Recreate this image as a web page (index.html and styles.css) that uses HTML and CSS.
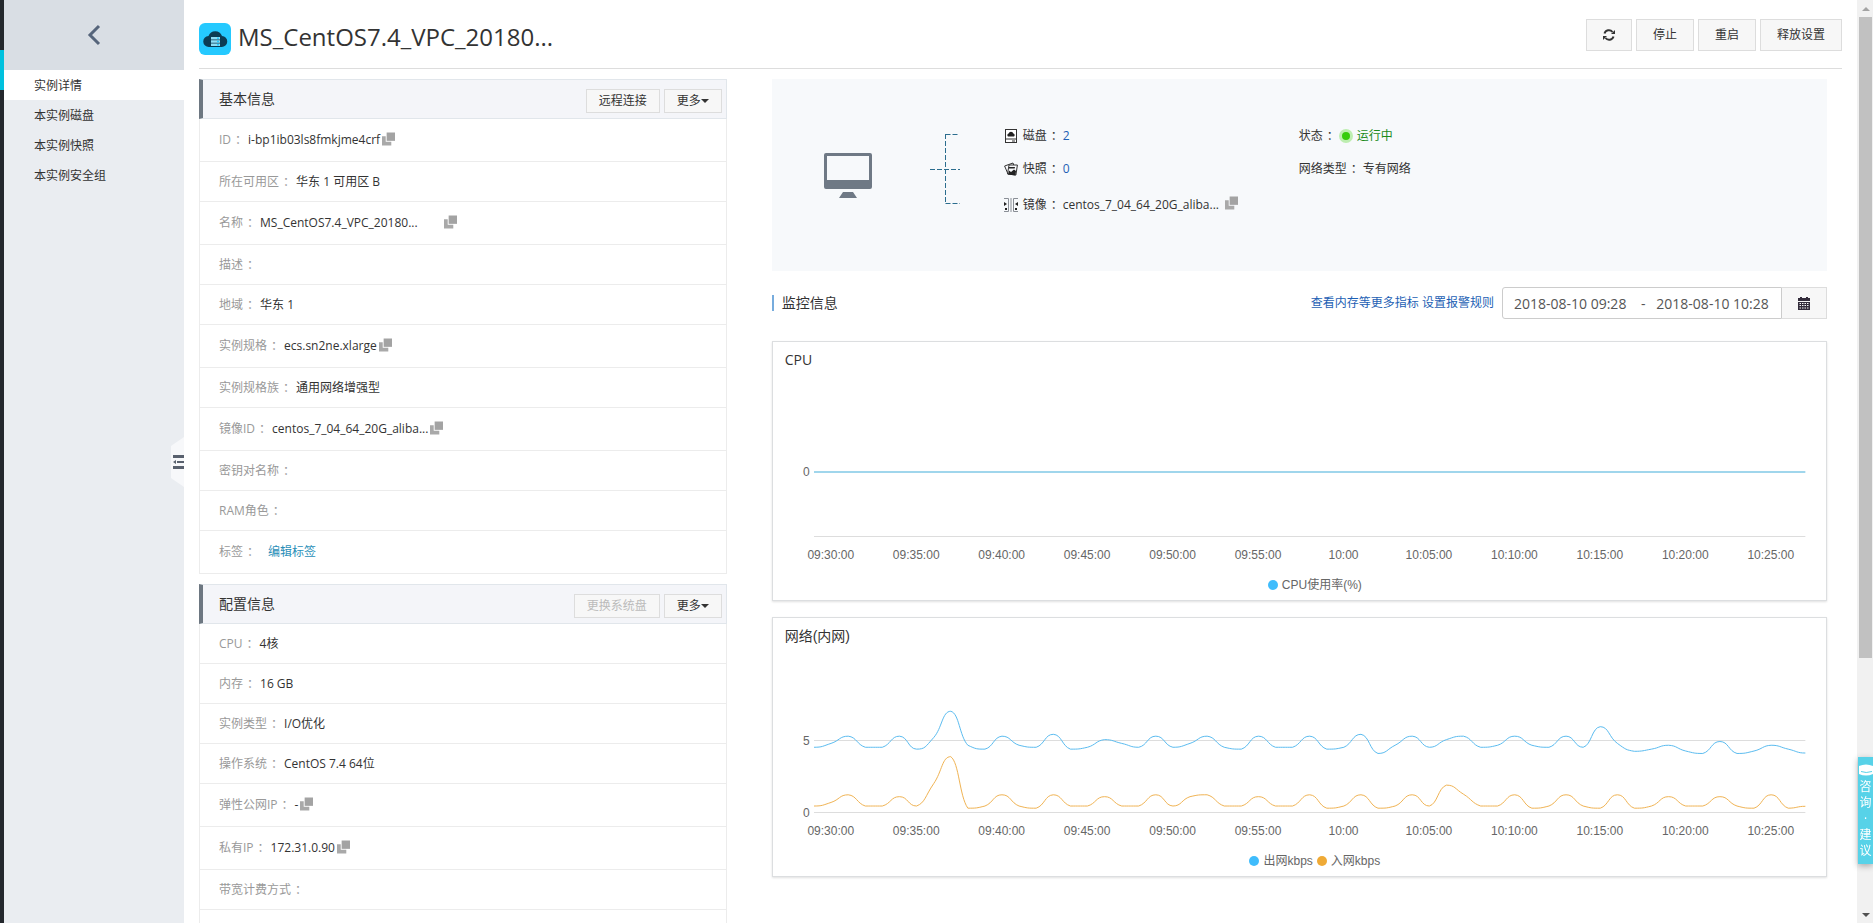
FILE: index.html
```html
<!DOCTYPE html>
<html lang="zh-CN">
<head>
<meta charset="utf-8">
<title>实例详情</title>
<link rel="stylesheet" href="styles.css">
</head>
<body>
<svg class="defs" aria-hidden="true">
  <symbol id="copy" viewBox="0 0 14 14"><path fill="#a3a3a3" d="M5 0h9v9H5z"/><path fill="#a9a9a9" d="M0 4h4v6h6v4H0z"/></symbol>
</svg>
<div class="page">
  <div class="rail"><div class="rail-active"></div></div>

  <aside class="sidebar">
    <button class="back" aria-label="返回">
      <svg width="14" height="22" viewBox="0 0 14 22"><path d="M12 2 3 11l9 9" fill="none" stroke="#56657b" stroke-width="3"/></svg>
    </button>
    <nav class="menu">
      <a class="menu-item active" href="#">实例详情</a>
      <a class="menu-item" href="#">本实例磁盘</a>
      <a class="menu-item" href="#">本实例快照</a>
      <a class="menu-item" href="#">本实例安全组</a>
    </nav>
    <button class="collapse" aria-label="收起">
      <svg width="13" height="50" viewBox="0 0 13 50"><path fill="#f7f8fa" d="M13 0v50L0 41V9z"/><path fill="#59616e" d="M2 18h11v3H2zM6 24h7v2H6zM2 29h11v3H2zM2 25l3-2v4z"/></svg>
    </button>
  </aside>

  <main class="main">
    <header class="topbar">
      <svg class="logo" width="32" height="32" viewBox="0 0 32 32"><rect width="32" height="32" rx="6" fill="#25c9ff"/><path fill="#0c3c54" d="M10 24a5.500 5.500 0 0 1-.5-11 7.200 7.200 0 0 1 13.500 0A5.500 5.500 0 0 1 22.500 24z"/><path fill="#8edcf5" d="M12 14h9v2.500h-9zM12 17.200h9v2.500h-9zM12 20.400h9v2.500h-9z"/><path fill="#25c9ff" d="M18 14.500h2v1.500h-2zM18 17.700h2v1.500h-2zM18 20.900h2v1.500h-2z"/></svg>
      <h1>MS_CentOS7.4_VPC_20180...</h1>
      <div class="actions">
        <button class="btn" aria-label="刷新">
          <svg width="12" height="14" viewBox="0 0 12 14"><g fill="none" stroke="#333" stroke-width="2"><path d="M1.500 5.500a4.600 4.600 0 0 1 8-1.500M10.500 8.500a4.600 4.600 0 0 1-8 1.500"/></g><path fill="#333" d="M12 2v4H8zM0 12V8h4z"/></svg>
        </button>
        <button class="btn">停止</button>
        <button class="btn">重启</button>
        <button class="btn">释放设置</button>
      </div>
    </header>

    <div class="content">
      <div class="col-info">
        <section class="card">
          <header class="card-head">
            <h2>基本信息</h2>
            <button class="btn small">远程连接</button>
            <button class="btn small">更多<i class="caret"></i></button>
          </header>
          <dl class="rows">
            <div class="row tall"><dt>ID<span class="colon">：</span></dt><dd>i-bp1ib03ls8fmkjme4crf<svg class="copy"><use href="#copy"/></svg></dd></div>
            <div class="row"><dt>所在可用区<span class="colon">：</span></dt><dd>华东 1 可用区 B</dd></div>
            <div class="row tall"><dt>名称<span class="colon">：</span></dt><dd>MS_CentOS7.4_VPC_20180...<svg class="copy far"><use href="#copy"/></svg></dd></div>
            <div class="row"><dt>描述<span class="colon">：</span></dt><dd></dd></div>
            <div class="row"><dt>地域<span class="colon">：</span></dt><dd>华东 1</dd></div>
            <div class="row tall"><dt>实例规格<span class="colon">：</span></dt><dd>ecs.sn2ne.xlarge<svg class="copy"><use href="#copy"/></svg></dd></div>
            <div class="row"><dt>实例规格族<span class="colon">：</span></dt><dd>通用网络增强型</dd></div>
            <div class="row tall"><dt>镜像ID<span class="colon">：</span></dt><dd>centos_7_04_64_20G_aliba...<svg class="copy"><use href="#copy"/></svg></dd></div>
            <div class="row"><dt>密钥对名称<span class="colon">：</span></dt><dd></dd></div>
            <div class="row"><dt>RAM角色<span class="colon">：</span></dt><dd></dd></div>
            <div class="row tall"><dt>标签<span class="colon">：</span></dt><dd><a class="tag-link" href="#">编辑标签</a></dd></div>
          </dl>
        </section>

        <section class="card">
          <header class="card-head">
            <h2>配置信息</h2>
            <button class="btn small" disabled>更换系统盘</button>
            <button class="btn small">更多<i class="caret"></i></button>
          </header>
          <dl class="rows">
            <div class="row"><dt>CPU<span class="colon">：</span></dt><dd>4核</dd></div>
            <div class="row"><dt>内存<span class="colon">：</span></dt><dd>16 GB</dd></div>
            <div class="row"><dt>实例类型<span class="colon">：</span></dt><dd>I/O优化</dd></div>
            <div class="row"><dt>操作系统<span class="colon">：</span></dt><dd>CentOS 7.4 64位</dd></div>
            <div class="row tall"><dt>弹性公网IP<span class="colon">：</span></dt><dd>-<svg class="copy"><use href="#copy"/></svg></dd></div>
            <div class="row tall"><dt>私有IP<span class="colon">：</span></dt><dd>172.31.0.90<svg class="copy"><use href="#copy"/></svg></dd></div>
            <div class="row"><dt>带宽计费方式<span class="colon">：</span></dt><dd></dd></div>
            <div class="row tall"></div>
          </dl>
        </section>
      </div>

      <div class="col-monitor">
        <section class="summary">
          <svg class="computer" width="48" height="46" viewBox="0 0 48 46"><path fill="#6f7985" fill-rule="evenodd" d="M2 0h44a2 2 0 0 1 2 2v32a2 2 0 0 1-2 2H2a2 2 0 0 1-2-2V2a2 2 0 0 1 2-2zm1 3v24h42V3zM19 39h10l4 6H15z"/></svg>
          <svg class="tree" width="30" height="70" viewBox="0 0 30 70"><path d="M15.500 0v70M15.500.5H28M0 35.500h30M15.500 69.500H30" fill="none" stroke="#2b6d8e" stroke-dasharray="5 2"/></svg>
          <ul class="facts">
            <li>
              <svg width="14" height="14" viewBox="0 0 14 14"><rect x="1.500" y=".5" width="11" height="13" fill="#fff" stroke="#333"/><path stroke="#333" d="M1.500 10h11M8 12h3"/><path fill="#222" d="M4 7.500a1.700 1.700 0 0 1 .6-3 2.500 2.500 0 0 1 4.800 0 1.700 1.700 0 0 1 .6 3z"/></svg>
              <span class="fact-label">磁盘<span class="colon">：</span></span><a href="#">2</a>
            </li>
            <li>
              <svg width="14" height="14" viewBox="0 0 14 14"><g fill="#f9fafc" stroke="#333"><path d="M.6 4 9 1l3 8-8 3z"/><path d="M5 3h8.400l-1.500 10L3.500 12z"/></g><path fill="#222" d="m4 12.500 1-4 2 1.500 3-2.500 2 1.500-.5 4.500zM5 5h6l-.3 1.500H5z"/></svg>
              <span class="fact-label">快照<span class="colon">：</span></span><a href="#">0</a>
            </li>
            <li>
              <svg width="14" height="14" viewBox="0 0 14 14"><g fill="none" stroke="#8a8f96"><path d="M0 .5h4.500v13H0M14 .5H9.500v13H14M7 0v14"/></g><path fill="#222" d="M0 4l3 2-3 2zM14 4l-3 2 3 2zM1 10h2v2H1zM11 10h2v2h-2z"/></svg>
              <span class="fact-label">镜像<span class="colon">：</span></span><span>centos_7_04_64_20G_aliba...</span><svg class="copy near"><use href="#copy"/></svg>
            </li>
          </ul>
          <ul class="facts">
            <li><span class="fact-label">状态<span class="colon">：</span></span><i class="status-dot"></i><span class="running">运行中</span></li>
            <li><span class="fact-label">网络类型<span class="colon">：</span></span><span>专有网络</span></li>
          </ul>
        </section>

        <div class="monitor-bar">
          <h2>监控信息</h2>
          <p class="links"><a href="#">查看内存等更多指标</a> <a href="#">设置报警规则</a></p>
          <div class="date-group">
            <input type="text" aria-label="时间范围" value="2018-08-10 09:28    -   2018-08-10 10:28">
            <button class="btn" aria-label="选择日期">
              <svg width="12" height="13" viewBox="0 0 12 13"><path fill="#332c3b" fill-rule="evenodd" d="M2 0h2v1h4V0h2v1h2v3H0V1h2zM0 5h12v8H0zm1.500 1v1h1.500V6zm2.500 0v1h1.500V6zm2.500 0v1H8V6zm2.500 0v1h1.500V6zM1.500 8v1H3V8zM4 8v1h1.500V8zm2.500 0v1H8V8zM9 8v1h1.500V8zm-7.500 2.500v1H3v-1zm2.500 0v1h1.500v-1zm2.500 0v1H8v-1zm2.500 0v1h1.500v-1z"/></svg>
            </button>
          </div>
        </div>

        <section class="chart">
          <h3>CPU</h3>
          <div class="chart-body">
            <div class="y-axis cpu"><span>0</span></div>
            <svg class="plot" viewBox="0 0 991 160" preserveAspectRatio="none">
              <path class="axis" d="M0 159.500h991"/>
              <path class="cpu-line" d="M0 95h991"/>
            </svg>
          </div>
          <div class="x-axis"><div class="ticks"><span>09:30:00</span><span>09:35:00</span><span>09:40:00</span><span>09:45:00</span><span>09:50:00</span><span>09:55:00</span><span>10:00</span><span>10:05:00</span><span>10:10:00</span><span>10:15:00</span><span>10:20:00</span><span>10:25:00</span></div></div>
          <div class="legend"><i class="dot blue"></i><span>CPU使用率(%)</span></div>
        </section>

        <section class="chart">
          <h3>网络(内网)</h3>
          <div class="chart-body">
            <div class="y-axis net"><span>5</span><span>0</span></div>
            <svg class="plot" viewBox="0 0 991 160" preserveAspectRatio="none">
              <path class="axis" d="M0 159.500h991M0 87.500h991"/>
              <path class="series out" id="series-out"/>
              <path class="series in" id="series-in"/>
            </svg>
          </div>
          <div class="x-axis"><div class="ticks"><span>09:30:00</span><span>09:35:00</span><span>09:40:00</span><span>09:45:00</span><span>09:50:00</span><span>09:55:00</span><span>10:00</span><span>10:05:00</span><span>10:10:00</span><span>10:15:00</span><span>10:20:00</span><span>10:25:00</span></div></div>
          <div class="legend"><i class="dot blue"></i><span>出网kbps</span><i class="dot orange"></i><span>入网kbps</span></div>
        </section>
      </div>
    </div>
  </main>

  <div class="scrollbar" aria-hidden="true">
    <i class="arrow up"></i>
    <div class="track"><div class="thumb"></div></div>
    <i class="arrow down"></i>
  </div>

  <a class="feedback" href="#">
    <svg width="15" height="12" viewBox="0 0 15 12"><path fill="#fff" d="M1 2Q8-1 15 2v8q-7 3-14 0z"/><path d="M3 7.500q5 2 11 0" fill="none" stroke="#57d2e8"/></svg>
    <span>咨</span><span>询</span><span>·</span><span>建</span><span>议</span>
  </a>
</div>
<script src="chart.js"></script>
</body>
</html>
```
FILE: styles.css
```css
* { box-sizing: border-box; }

body {
  margin: 0;
  background: #fff;
  color: #333;
  font: 12px/20px "Open Sans", "Noto Sans CJK SC", sans-serif;
}

h1, h2, h3, p, ul, dl, dd { margin: 0; padding: 0; font-weight: normal; }
ul { list-style: none; }
a { color: #1d5fb4; text-decoration: none; }
button, input { font: inherit; color: inherit; }
.defs { display: none; }

.page {
  display: grid;
  grid-template-columns: 4px 180px minmax(0, 1fr) 16px;
  height: 100vh;
  overflow: hidden;
}

/* Left rail and menu */
.rail { background: #24282d; padding-top: 50px; }
.rail-active { height: 40px; background: #00c1de; }

.sidebar { position: relative; background: #eaedf1; }
.back {
  display: flex;
  align-items: center;
  justify-content: center;
  width: 100%;
  height: 70px;
  padding: 0;
  border: 0;
  background: #d9dee4;
}
.menu-item {
  display: block;
  padding: 2px 0 0 30px;
  line-height: 28px;
  color: #333;
}
.menu-item.active { background: #fff; }
.collapse {
  position: absolute;
  top: 50%;
  right: 0;
  display: flex;
  padding: 0;
  border: 0;
  background: none;
  transform: translateY(-50%);
}

/* Main column */
.main { padding: 0 15px; overflow: hidden; }
.topbar {
  display: flex;
  align-items: center;
  height: 69px;
  padding-bottom: 4px;
  border-bottom: 1px solid #ddd;
}
.topbar .logo { margin-top: 14px; }
.topbar h1 {
  flex: 1;
  margin: 10px 0 0 7px;
  font-size: 24px;
  line-height: 32px;
}
.actions { display: flex; gap: 4px; margin-top: 6px; }

.btn {
  display: inline-flex;
  align-items: center;
  justify-content: center;
  height: 32px;
  padding: 0 16px;
  border: 1px solid #ddd;
  background: #f7f7f7;
}
.btn.small { height: 24px; margin-top: 4px; padding: 0 12px; }
.btn:disabled { color: #bbb; }
.caret {
  border: 4px solid transparent;
  border-top-color: #333;
  border-bottom: 0;
}

.content {
  display: grid;
  grid-template-columns: minmax(0, 1fr) minmax(0, 2fr);
  gap: 45px;
  padding: 10px 15px 0 0;
}

/* Info cards */
.card { margin-bottom: 10px; }
.card-head {
  display: flex;
  align-items: center;
  gap: 4px;
  height: 40px;
  padding: 0 4px 0 16px;
  border: 1px solid #e1e6eb;
  border-left: 4px solid #6d7781;
  background: #f4f5f9;
}
.card-head h2 { flex: 1; font-size: 14px; }
.rows { border: 1px solid #ececec; border-width: 0 1px; }
.row {
  display: flex;
  align-items: center;
  height: 40px;
  padding-left: 19px;
  border-bottom: 1px solid #ececec;
  white-space: nowrap;
}
.row.tall { height: 43px; }
.row dt { color: #999; }
.row dd { display: flex; align-items: center; margin-left: 5px; }
.colon { margin: 0 -4px 0 4px; }
.copy { width: 13px; height: 14px; margin: 0 0 3px 2px; }
.copy.near { margin-left: 6px; }
.copy.far { margin-left: 26px; }
.tag-link { margin-left: 8px; color: #2a8fb8; }

/* Instance summary */
.summary {
  display: grid;
  grid-template-columns: 106px 74px 295px 1fr;
  align-items: start;
  min-height: 192px;
  padding: 40px 0 0 52px;
  background: #f7f9fb;
}
.computer { margin-top: 34px; }
.tree { margin-top: 15px; }
.facts { white-space: nowrap; }
.facts li { display: flex; align-items: center; height: 33px; }
.facts li:nth-child(3) { height: 39px; }
.facts li > svg:first-child { margin-right: 5px; }
.fact-label { margin-right: 4px; }
.status-dot {
  width: 14px;
  height: 14px;
  margin-right: 4px;
  border: 3px solid #bdeeb0;
  border-radius: 50%;
  background: #36cc0c;
}
.running { color: #1a8a1a; }

/* Monitoring */
.monitor-bar { display: flex; align-items: center; margin: 16px 0 22px; }
.monitor-bar h2 {
  flex: 1;
  padding-left: 8px;
  border-left: 2px solid #77acdd;
  font-size: 14px;
  line-height: 16px;
}
.links { margin-right: 8px; }
.date-group { display: flex; }
.date-group input {
  width: 280px;
  height: 32px;
  padding: 0 11px;
  border: 1px solid #ccc;
  border-radius: 3px 0 0 3px;
  background: #fff;
  color: #555;
  font-size: 14px;
  white-space: pre;
}
.date-group .btn { width: 45px; border-left: 0; }

.chart {
  margin-bottom: 16px;
  padding: 0 21px 5px 0;
  border: 1px solid #dcdee0;
  box-shadow: 0 1px 2px rgba(0, 0, 0, 0.12);
}
.chart h3 { padding: 8px 0 7px 12px; font-size: 14px; line-height: 20px; }
.chart:last-child h3,
.chart-body, .x-axis, .legend { font-family: "Liberation Sans", "Noto Sans CJK SC", sans-serif; }
.chart-body { display: flex; }
.y-axis {
  display: flex;
  flex-direction: column;
  flex: 0 0 41px;
  height: 160px;
  padding-right: 4px;
  text-align: right;
  color: #666;
}
.y-axis.cpu { padding-top: 85px; }
.y-axis.net { padding-top: 78px; gap: 52px; }
.plot { flex: 1; width: 0; height: 160px; overflow: visible; }
.plot path { fill: none; vector-effect: non-scaling-stroke; }
.plot .axis { stroke: #ddd; }
.plot .cpu-line { stroke: #a0d6ec; stroke-width: 2; }
.plot .out { stroke: #5bbcf0; }
.plot .in { stroke: #f0b353; }
.x-axis { margin: 8px 0 10px 41px; color: #666; }
.ticks { display: flex; margin: 0 -0.862% 0 -2.586%; }
.ticks span { flex: 1 1 0; text-align: center; }
.legend {
  display: flex;
  align-items: center;
  justify-content: center;
  gap: 4px;
  padding-left: 52px;
  color: #666;
}
.dot { width: 10px; height: 10px; border-radius: 50%; }
.dot.blue { background: #3fbcfc; }
.dot.orange { background: #efaa36; }

/* Page scrollbar */
.scrollbar {
  display: flex;
  flex-direction: column;
  align-items: center;
  padding: 7px 1px 6px 2px;
  background: #f1f1f1;
}
.arrow { border: 4px solid transparent; }
.arrow.up { border-top: 0; border-bottom-color: #a3a3a3; }
.arrow.down { border-bottom: 0; border-top-color: #505050; }
.track { flex: 1; width: 100%; margin: 6px 0; }
.thumb { height: 72%; background: #c1c1c1; }

.feedback {
  position: fixed;
  top: 82%;
  right: 0;
  display: flex;
  flex-direction: column;
  align-items: center;
  width: 15px;
  padding: 7px 0 5px;
  background: #57d2e8;
  box-shadow: 0 2px 6px rgba(0, 0, 0, 0.3);
  color: #fff;
  line-height: 16px;
}
.feedback svg { margin-bottom: 3px; }
```
FILE: chart.js
```js
// One sample per minute, 09:29 to 10:27.
const outbound = [4.53, 4.8, 5.3, 4.53, 4.53, 5.3, 4.4, 5.2, 7.03, 4.67, 4.4, 5.3, 4.67, 4.53, 5.43, 4.4, 4.53, 5.06, 4.8, 4.53, 5.3, 4.53, 4.8, 5.3, 4.53, 4.4, 5.3, 4.53, 4.53, 5.3, 4.4, 4.53, 5.43, 4.1, 4.67, 5.3, 4.53, 5.06, 5.3, 4.53, 4.67, 5.3, 4.67, 4.53, 5.3, 4.53, 5.96, 4.8, 4.25, 4.4, 4.67, 4.27, 4.1, 4.93, 4.1, 4.27, 4.67, 4.4, 4.13];
const inbound = [0.45, 0.7, 1.23, 0.45, 0.45, 1.1, 0.45, 2, 3.88, 0.3, 0.45, 1.23, 0.45, 0.3, 1.23, 0.45, 0.45, 1.1, 0.45, 0.45, 1.23, 0.45, 1.1, 1.23, 0.45, 0.45, 1.1, 0.45, 0.45, 1.23, 0.3, 0.45, 1.23, 0.3, 0.45, 1.23, 0.45, 1.9, 1.27, 0.45, 0.45, 1.23, 0.3, 0.45, 1.23, 0.45, 0.3, 1.23, 0.3, 0.45, 1.1, 0.45, 0.45, 1.1, 0.45, 0.3, 1.23, 0.3, 0.43];

// Cubic curve through the samples; control points stay inside each segment's range.
function smoothPath(values) {
  const step = 991 / (values.length - 1);
  const y = values.map(v => 159.5 - v * 14.4);
  const clamp = (v, a, b) => Math.min(Math.max(v, Math.min(a, b)), Math.max(a, b));
  const slope = i => (i === 0 || i === y.length - 1 ? 0 : (y[i + 1] - y[i - 1]) / 4);
  let d = `M0 ${y[0].toFixed(2)}`;
  for (let i = 1; i < y.length; i++) {
    const c1 = clamp(y[i - 1] + slope(i - 1), y[i - 1], y[i]);
    const c2 = clamp(y[i] - slope(i), y[i - 1], y[i]);
    d += `C${((i - 0.5) * step).toFixed(1)} ${c1.toFixed(2)} ${((i - 0.5) * step).toFixed(1)} ${c2.toFixed(2)} ${(i * step).toFixed(1)} ${y[i].toFixed(2)}`;
  }
  return d;
}

document.getElementById('series-out').setAttribute('d', smoothPath(outbound));
document.getElementById('series-in').setAttribute('d', smoothPath(inbound));
```
